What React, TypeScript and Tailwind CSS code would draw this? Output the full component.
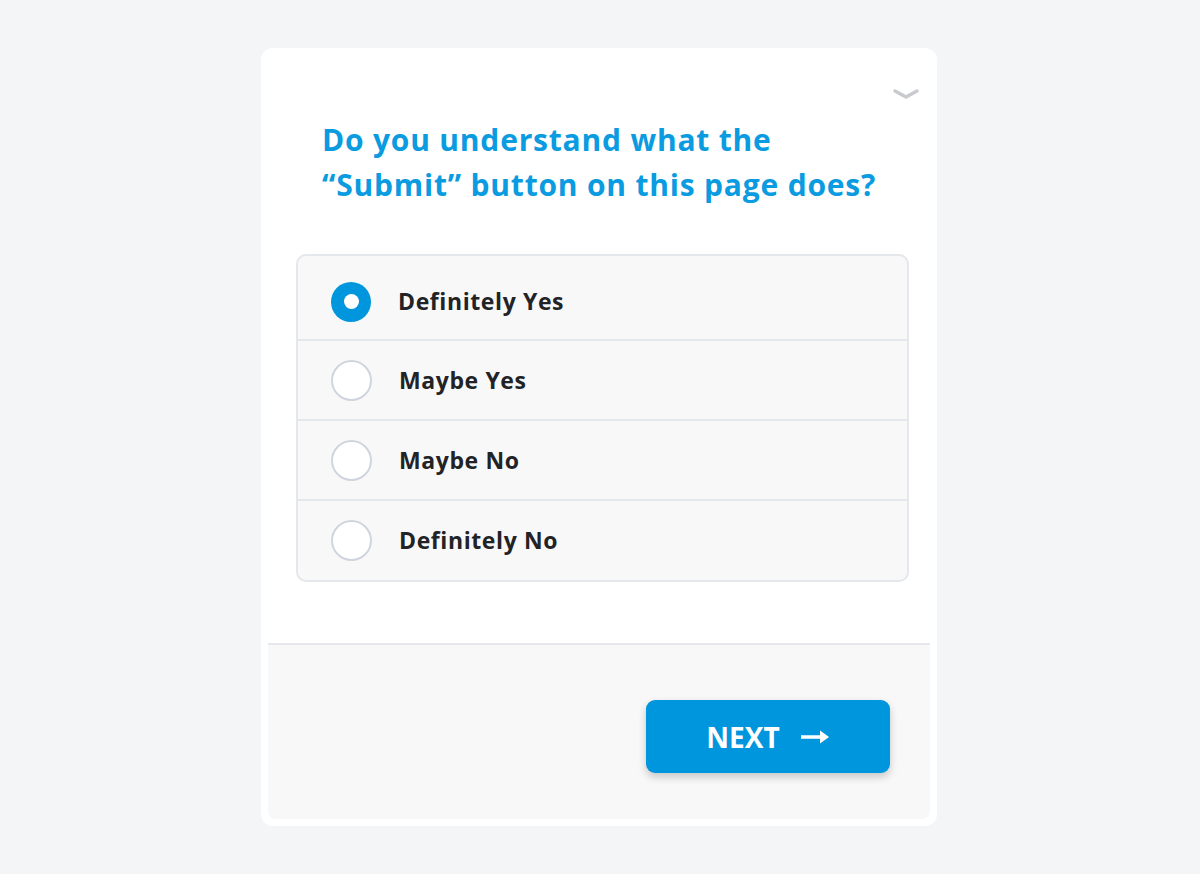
import { useState } from 'react'

const options = ['Definitely Yes', 'Maybe Yes', 'Maybe No', 'Definitely No']

function Radio({ checked }: { checked: boolean }) {
  if (checked) {
    return (
      <span className="flex h-[40px] w-[40px] shrink-0 items-center justify-center rounded-full bg-[#0096de]">
        <span className="h-[15px] w-[15px] rounded-full bg-white" />
      </span>
    )
  }
  return <span className="h-[41px] w-[41px] shrink-0 rounded-full border-2 border-[#cfd4de] bg-white" />
}

export default function App() {
  const [selected, setSelected] = useState(0)

  return (
    <div className="min-h-screen bg-[#f4f5f7] pt-[48px]" style={{ fontFamily: '"Open Sans", "Noto Sans", sans-serif' }}>
      <div className="ml-[261px] flex w-[676px] flex-col rounded-[12px] bg-white px-[7px] pb-[7px]">
        <div className="relative pt-[69px] pb-[61px]">
          <svg className="absolute right-[10px] top-[40px]" width="28" height="12" viewBox="0 0 28 12" fill="none">
            <path d="M3 3 L14 9 L25 3" stroke="#c8cace" strokeWidth="3.5" strokeLinecap="round" strokeLinejoin="round" />
          </svg>

          <h1 className="ml-[54px] text-[30px] font-bold leading-[45px] tracking-[0.8px] text-[#0a9be0]">
            Do you understand what the
            <br />
            “Submit” button on this page does?
          </h1>

          <div className="ml-[28px] mr-[21px] mt-[47px] overflow-hidden rounded-[10px] border-2 border-[#e4e7ec] bg-[#f8f8f8]">
            {options.map((label, i) => (
              <button
                key={label}
                onClick={() => setSelected(i)}
                className={`flex w-full items-center gap-[27px] pl-[33px] text-left ${i === 0 ? 'h-[83px] pt-[8px]' : i === 3 ? 'h-[81px] border-t-2 border-[#e4e7ec]' : 'h-[80px] border-t-2 border-[#e4e7ec]'}`}
              >
                <Radio checked={selected === i} />
                <span className="text-[23px] font-bold tracking-[0.6px] text-[#222326]">{label}</span>
              </button>
            ))}
          </div>
        </div>

        <div className="flex h-[176px] justify-end rounded-b-[8px] border-t-2 border-[#e6e8ec] bg-[#f8f8f8] pr-[40px] pt-[55px]">
          <button className="flex h-[73px] w-[244px] items-center justify-center gap-[20px] rounded-[9px] bg-[#0096de] text-white shadow-[0_4px_8px_rgba(0,0,0,0.2)]">
            <span className="text-[28px] font-bold">NEXT</span>
            <svg width="30" height="16" viewBox="0 0 30 16" fill="none">
              <path d="M1 8 H24" stroke="white" strokeWidth="3.5" />
              <path d="M20 1.5 L29 8 L20 14.5 Z" fill="white" />
            </svg>
          </button>
        </div>
      </div>
    </div>
  )
}
